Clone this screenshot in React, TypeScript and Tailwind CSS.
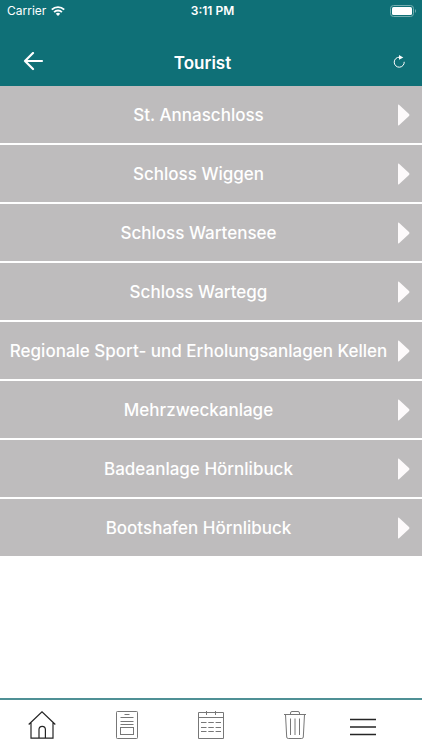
const places = [
  "St. Annaschloss",
  "Schloss Wiggen",
  "Schloss Wartensee",
  "Schloss Wartegg",
  "Regionale Sport- und Erholungsanlagen Kellen",
  "Mehrzweckanlage",
  "Badeanlage Hörnlibuck",
  "Bootshafen Hörnlibuck",
];

function StatusBar() {
  return (
    <div className="grid h-[22px] grid-cols-[1fr_auto_1fr] items-center pr-1 pl-[7px] text-[12px] leading-4">
      <div className="flex items-center gap-[5px]">
        <span>Carrier</span>
        <svg width="14" height="10" viewBox="0 0 14 10" fill="none" stroke="white" strokeWidth="1.9">
          <path d="M0.8 3.7a8.8 8.8 0 0 1 12.4 0" />
          <path d="M3.1 6.1a5.5 5.5 0 0 1 7.8 0" />
          <path d="M7 10 4.8 7.8a3.1 3.1 0 0 1 4.4 0z" fill="white" stroke="none" />
        </svg>
      </div>
      <span className="font-semibold">3:11 PM</span>
      <svg className="justify-self-end" width="28" height="12" viewBox="0 0 28 12" fill="none">
        <rect x="0.5" y="0.5" width="23" height="11" rx="3" stroke="#75aeb1" />
        <rect x="2" y="2" width="20" height="8" rx="1.5" fill="white" />
        <path d="M25 4v4q2-2 0-4" fill="#75aeb1" />
      </svg>
    </div>
  );
}

function HomeIcon() {
  return (
    <svg width="28" height="28" viewBox="0 0 28 28" fill="none" stroke="#252525" strokeWidth="1.2">
      <path d="M0.7 13.5 14 0.8l13.3 12.7M3 11.5v15.7h22V11.5M11 27v-8.5a3.2 3.2 0 0 1 6.4 0V27" />
    </svg>
  );
}

function DocumentIcon() {
  return (
    <svg width="22" height="28" viewBox="0 0 22 28" fill="none" stroke="#777777">
      <rect x="0.5" y="0.5" width="21" height="27" rx="0.8" />
      <path d="M8.5 3.5h5M4.5 6.5h13M4.5 10.5h13M4.5 13.5h13" />
      <rect x="4.5" y="16.5" width="13" height="7" />
    </svg>
  );
}

function CalendarIcon() {
  return (
    <svg width="26" height="28" viewBox="0 0 26 28" fill="none" stroke="#777777">
      <path d="M0.5 1.5h25v26H0.5zM0.5 6.5h25M8.5 0v4M17.5 0v4" />
      <path d="M3 11.5h20M3 16.5h20M3 20.5h20" strokeDasharray="5.5 1.8" />
    </svg>
  );
}

function TrashIcon() {
  return (
    <svg width="24" height="28" viewBox="0 0 24 28" fill="none" stroke="#777777">
      <path d="M1 3.5h22M7.5 3.5V2q0-1.5 1.5-1.5h6q1.5 0 1.5 1.5v1.5" />
      <path d="M2.5 3.5 3.7 26q.1 1.5 1.6 1.5h13.4q1.5 0 1.6-1.5l1.2-22.5M7.5 7.5v16.5M12 7.5v16.5M16.5 7.5v16.5" />
    </svg>
  );
}

function MenuIcon() {
  return (
    <svg width="26" height="18" viewBox="0 0 26 18" stroke="#252525" strokeWidth="1.7">
      <path d="M0 1.5h26M0 9h26M0 16.5h26" />
    </svg>
  );
}

export default function App() {
  return (
    <div className="flex min-h-screen flex-col bg-white font-['Inter','Noto_Sans',sans-serif] text-white">
      <header className="bg-[#0f7077]">
        <StatusBar />
        <div className="flex h-16 items-center pt-4 pr-4 pl-[22px]">
          <button type="button" aria-label="Back">
            <svg width="22" height="20" viewBox="0 0 22 20" fill="none" stroke="white" strokeWidth="2.2" strokeLinecap="round" strokeLinejoin="round">
              <path d="M20 9H3M11 1 3 9l8 8" />
            </svg>
          </button>
          <h1 className="flex-1 pt-[2px] pr-8 text-center text-[17px] leading-6 font-semibold">Tourist</h1>
          <button type="button" aria-label="Refresh">
            <svg width="13" height="14" viewBox="0 0 13 14" fill="none" stroke="white">
              <path d="M11.2 6.8a5 5 0 1 1-4.7-4.6" />
              <path d="M6 0l4.3 2.4L6 4.8z" fill="white" stroke="none" />
            </svg>
          </button>
        </div>
      </header>

      <main className="flex-1">
        <ul className="flex flex-col gap-[2px]">
          {places.map((place) => (
            <li key={place}>
              <button type="button" className="flex h-[57px] w-full items-center bg-[#bebcbd] pr-3 text-[17px] leading-6 font-medium">
                <span className="flex-1 text-center whitespace-nowrap">{place}</span>
                <svg width="13" height="22" viewBox="0 0 13 22" fill="#fdfafb">
                  <path d="M1 1.2Q1 0 2 .8L12 10q1 1 0 2L2 21.2Q1 22 1 20.8z" />
                </svg>
              </button>
            </li>
          ))}
        </ul>
      </main>

      <nav aria-label="Main" className="grid h-[52px] grid-cols-5 border-t-2 border-[#4f9095]">
        <button type="button" aria-label="Home" className="flex items-center justify-center">
          <HomeIcon />
        </button>
        <button type="button" aria-label="News" className="flex items-center justify-center">
          <DocumentIcon />
        </button>
        <button type="button" aria-label="Calendar" className="flex items-center justify-center">
          <CalendarIcon />
        </button>
        <button type="button" aria-label="Waste" className="flex items-center justify-center">
          <TrashIcon />
        </button>
        <button type="button" aria-label="Menu" className="flex items-center pt-1 pl-3">
          <MenuIcon />
        </button>
      </nav>
    </div>
  );
}
